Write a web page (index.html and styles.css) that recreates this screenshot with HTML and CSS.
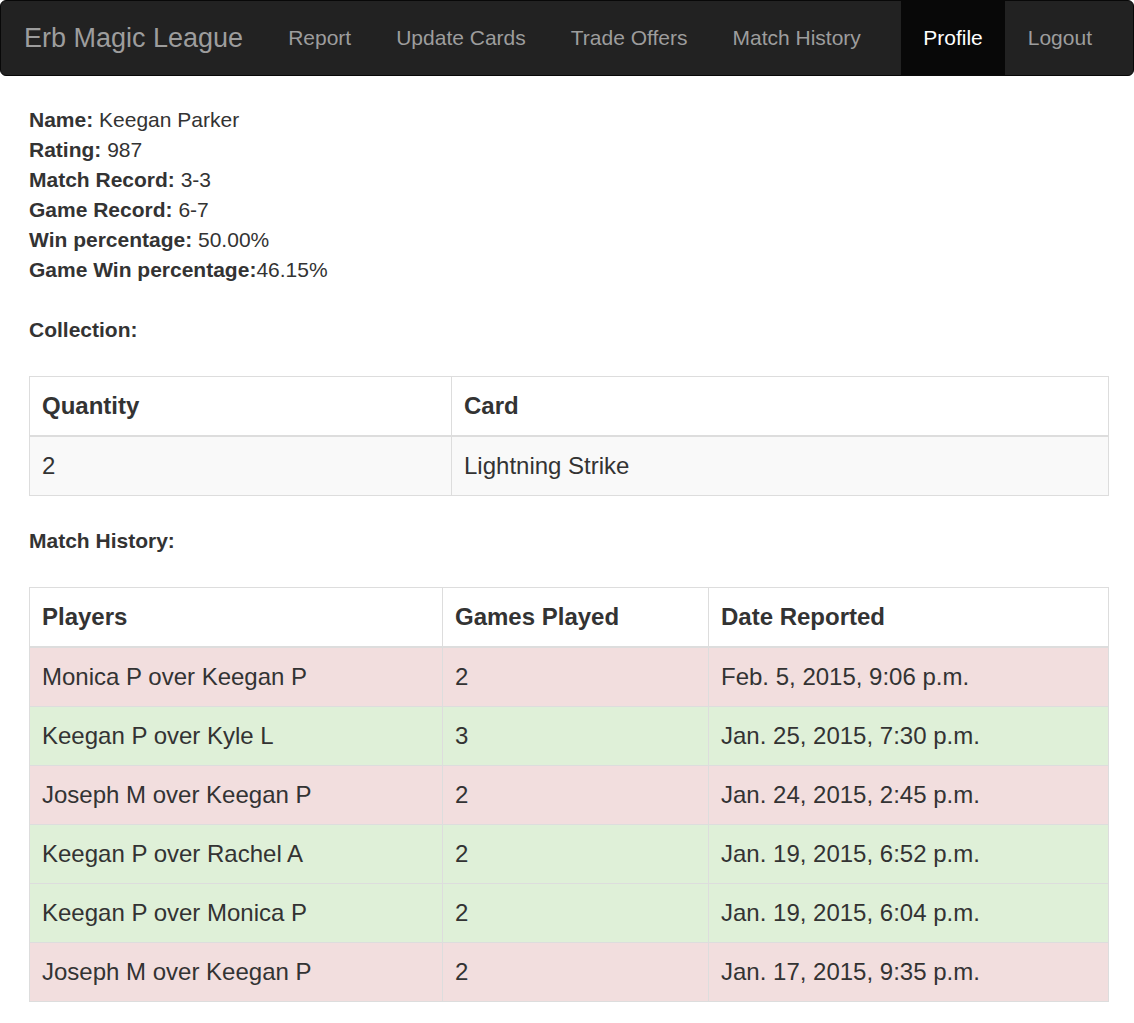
FILE: index.html
```html
<!DOCTYPE html>
<html lang="en">
<head>
<meta charset="utf-8">
<title>Erb Magic League - Profile</title>
<link rel="stylesheet" href="styles.css">
</head>
<body>
<nav class="navbar">
  <a class="brand" href="#">Erb Magic League</a>
  <ul class="nav">
    <li><a href="#">Report</a></li>
    <li><a href="#">Update Cards</a></li>
    <li><a href="#">Trade Offers</a></li>
    <li><a href="#">Match History</a></li>
  </ul>
  <ul class="nav nav-right">
    <li class="active"><a href="#">Profile</a></li>
    <li><a href="#">Logout</a></li>
  </ul>
</nav>
<main class="content">
  <div class="stats">
    <div><strong>Name:</strong> Keegan Parker</div>
    <div><strong>Rating:</strong> 987</div>
    <div><strong>Match Record:</strong> 3-3</div>
    <div><strong>Game Record:</strong> 6-7</div>
    <div><strong>Win percentage:</strong> 50.00%</div>
    <div><strong>Game Win percentage:</strong>46.15%</div>
  </div>
  <h4 class="label">Collection:</h4>
  <table class="table striped">
    <colgroup><col class="c-qty"><col></colgroup>
    <thead><tr><th>Quantity</th><th>Card</th></tr></thead>
    <tbody><tr><td>2</td><td>Lightning Strike</td></tr></tbody>
  </table>
  <h4 class="label">Match History:</h4>
  <table class="table">
    <colgroup><col class="c-players"><col class="c-games"><col></colgroup>
    <thead><tr><th>Players</th><th>Games Played</th><th>Date Reported</th></tr></thead>
    <tbody>
      <tr class="danger"><td>Monica P over Keegan P</td><td>2</td><td>Feb. 5, 2015, 9:06 p.m.</td></tr>
      <tr class="success"><td>Keegan P over Kyle L</td><td>3</td><td>Jan. 25, 2015, 7:30 p.m.</td></tr>
      <tr class="danger"><td>Joseph M over Keegan P</td><td>2</td><td>Jan. 24, 2015, 2:45 p.m.</td></tr>
      <tr class="success"><td>Keegan P over Rachel A</td><td>2</td><td>Jan. 19, 2015, 6:52 p.m.</td></tr>
      <tr class="success"><td>Keegan P over Monica P</td><td>2</td><td>Jan. 19, 2015, 6:04 p.m.</td></tr>
      <tr class="danger"><td>Joseph M over Keegan P</td><td>2</td><td>Jan. 17, 2015, 9:35 p.m.</td></tr>
    </tbody>
  </table>
</main>
</body>
</html>
```
FILE: styles.css
```css
* { box-sizing: border-box; }
html, body { margin: 0; padding: 0; background: #fff; }
body {
  font-family: "Liberation Sans", Arial, Helvetica, sans-serif;
  font-size: 21px;
  line-height: 30px;
  color: #333;
}
a { text-decoration: none; }

.navbar {
  display: flex;
  align-items: stretch;
  height: 76px;
  background: #222;
  border: 1px solid #080808;
  border-radius: 6px;
  padding: 0 18.5px 0 0.5px;
}
.brand {
  font-size: 27px;
  line-height: 30px;
  padding: 22px 22.5px;
  color: #9d9d9d;
}
.nav {
  list-style: none;
  margin: 0;
  padding: 0;
  display: flex;
}
.nav-right { margin-left: auto; }
.nav a {
  display: block;
  font-size: 21px;
  line-height: 30px;
  padding: 22px 22.5px;
  color: #9d9d9d;
}
.nav .active a {
  color: #fff;
  background: #080808;
}

.content {
  padding: 29px 25px 0 29px;
}
.stats div { line-height: 30px; }
.label {
  font-size: 21px;
  line-height: 30px;
  font-weight: bold;
  margin: 30px 0 31px;
}

.table {
  width: 100%;
  table-layout: fixed;
  border-collapse: collapse;
  border: 1px solid #ddd;
  font-size: 24px;
  line-height: 34px;
}
.c-qty { width: 422px; }
.c-players { width: 413px; }
.c-games { width: 266px; }
.table th, .table td {
  padding: 12px;
  text-align: left;
  border: 1px solid #ddd;
  vertical-align: top;
}
.table th { font-weight: bold; border-bottom: 2px solid #ddd; }
.striped tbody tr:nth-child(odd) td { background: #f9f9f9; }
.table tr.danger td { background: #f2dede; }
.table tr.success td { background: #dff0d8; }
```
